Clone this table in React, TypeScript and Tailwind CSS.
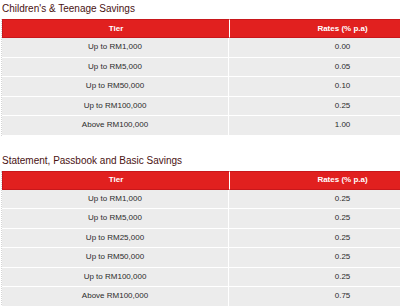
import React from "react";

interface Tier {
  label: string;
  rate: string;
}

const childrenTiers: Tier[] = [
  { label: "Up to RM1,000", rate: "0.00" },
  { label: "Up to RM5,000", rate: "0.05" },
  { label: "Up to RM50,000", rate: "0.10" },
  { label: "Up to RM100,000", rate: "0.25" },
  { label: "Above RM100,000", rate: "1.00" },
];

const basicTiers: Tier[] = [
  { label: "Up to RM1,000", rate: "0.25" },
  { label: "Up to RM5,000", rate: "0.25" },
  { label: "Up to RM25,000", rate: "0.25" },
  { label: "Up to RM50,000", rate: "0.25" },
  { label: "Up to RM100,000", rate: "0.25" },
  { label: "Above RM100,000", rate: "0.75" },
];

function RateTable({ rows }: { rows: Tier[] }) {
  return (
    <table className="w-[455px] table-fixed border-separate border-spacing-0 border-l border-dotted border-[#d4d4d4] text-[8px] leading-[10px]">
      <thead>
        <tr>
          <th className="h-[19px] w-1/2 border border-r-0 border-[#c8171b] bg-[#e1201f] p-0 text-center font-bold text-white">
            Tier
          </th>
          <th className="h-[19px] w-1/2 border border-[#c8171b] border-l-white bg-[#e1201f] p-0 text-center font-bold text-white">
            Rates (% p.a)
          </th>
        </tr>
      </thead>
      <tbody>
        {rows.map((r) => (
          <tr key={r.label}>
            <td className="h-[19.5px] border-b border-r border-white bg-[#ececec] p-0 text-center text-[#2b2b2b]">
              {r.label}
            </td>
            <td className="h-[19.5px] border-b border-white bg-[#ececec] p-0 text-center text-[#2b2b2b]">
              {r.rate}
            </td>
          </tr>
        ))}
      </tbody>
    </table>
  );
}

export default function App() {
  return (
    <div className="h-[306px] w-[400px] overflow-hidden bg-white pl-[1px] font-['Liberation_Sans',Arial,sans-serif]">
      {/* children's savings */}
      <h2 className="mt-[3px] mb-[4px] pl-[1px] text-[10px] leading-[12px] text-[#4a1212]">
        Children's &amp; Teenage Savings
      </h2>
      <RateTable rows={childrenTiers} />

      {/* statement / passbook */}
      <h2 className="mt-[19px] mb-[4px] pl-[1px] text-[10px] leading-[12px] text-[#4a1212]">
        Statement, Passbook and Basic Savings
      </h2>
      <RateTable rows={basicTiers} />
    </div>
  );
}
